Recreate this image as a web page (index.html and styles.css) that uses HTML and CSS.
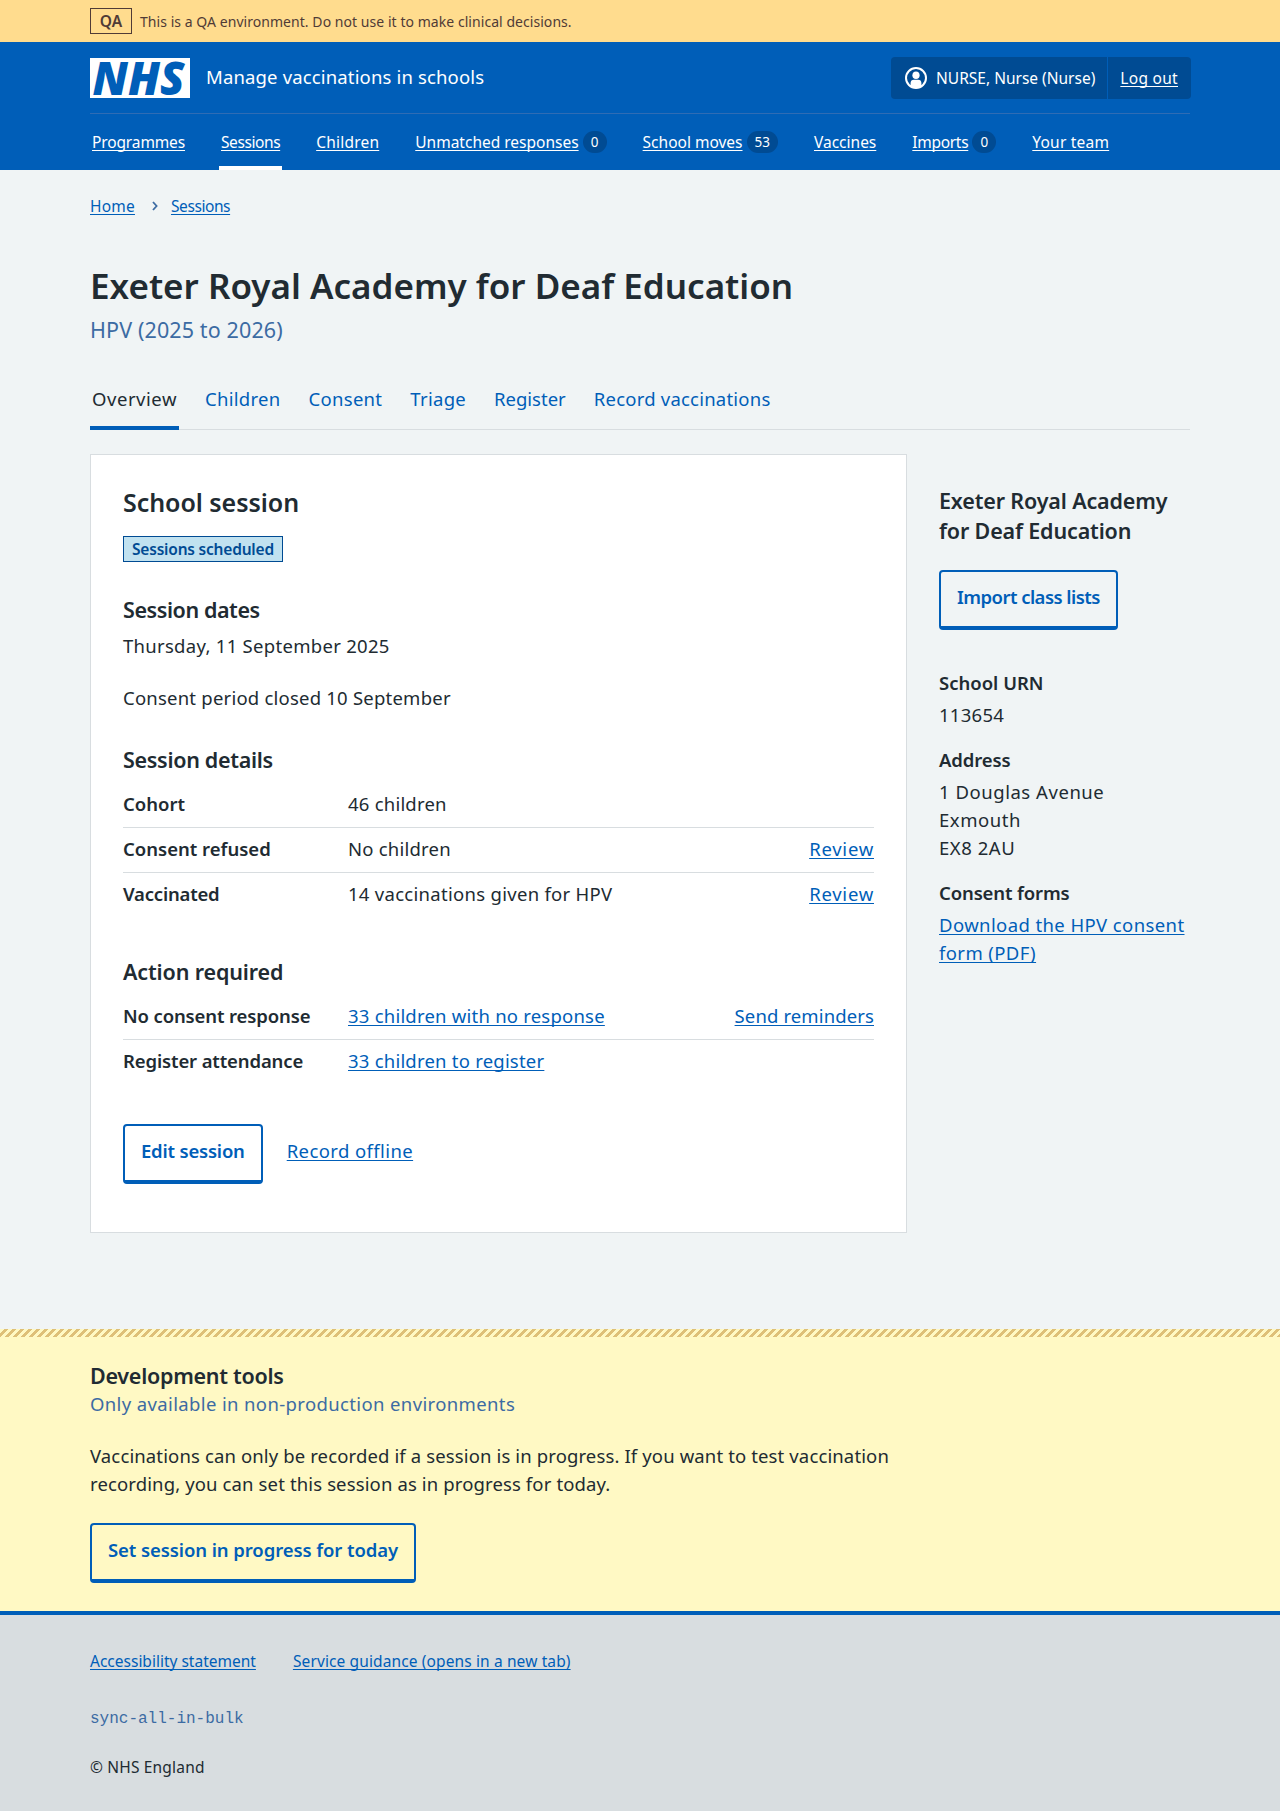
FILE: index.html
```
<!DOCTYPE html>
<html lang="en">
<head>
<meta charset="utf-8">
<title>Exeter Royal Academy for Deaf Education – Manage vaccinations in schools</title>
<link rel="stylesheet" href="styles.css">
</head>
<body>
<div class="environment">
  <div class="container environment-row">
    <strong class="environment-tag">QA</strong>
    <span class="environment-text">This is a QA environment. Do not use it to make clinical decisions.</span>
  </div>
</div>

<header class="header">
  <div class="container">
    <div class="header-top">
      <svg class="logo" width="100" height="40" viewBox="0 0 100 40" role="img" aria-label="NHS">
        <rect width="100" height="40" fill="#fff"/>
        <text class="logo-text" x="2.5" y="36.5" textLength="92" lengthAdjust="spacingAndGlyphs">NHS</text>
      </svg>
      <span class="service-name">Manage vaccinations in schools</span>
      <div class="account">
        <span class="account-user">
          <svg width="22" height="22" viewBox="0 0 22 22" aria-hidden="true">
            <circle cx="11" cy="11" r="10" fill="none" stroke="#fff" stroke-width="2"/>
            <ellipse cx="11" cy="8.2" rx="3.6" ry="3.8" fill="#fff"/>
            <path d="M5.6 19.3v-3.2a3.4 3.4 0 0 1 3.4-3.4h4a3.4 3.4 0 0 1 3.4 3.4v3.2a10 10 0 0 1-10.8 0z" fill="#fff"/>
          </svg>
          NURSE, Nurse (Nurse)
        </span>
        <span class="account-logout"><a class="t-3" href="#">Log out</a></span>
      </div>
    </div>
    <nav class="nav">
      <span class="nav-item"><a class="t--1" href="#">Programmes</a></span>
      <span class="nav-item nav-item-current"><a class="t--4" href="#">Sessions</a></span>
      <span class="nav-item"><a class="t-2" href="#">Children</a></span>
      <span class="nav-item"><a href="#">Unmatched responses</a><span class="count">0</span></span>
      <span class="nav-item"><a href="#">School moves</a><span class="count">53</span></span>
      <span class="nav-item"><a href="#">Vaccines</a></span>
      <span class="nav-item"><a class="t--3" href="#">Imports</a><span class="count">0</span></span>
      <span class="nav-item"><a class="t-2" href="#">Your team</a></span>
    </nav>
  </div>
</header>

<div class="container">
  <nav class="breadcrumb">
    <a class="t-2" href="#">Home</a>
    <svg width="6" height="10" viewBox="0 0 6 10" aria-hidden="true"><path d="M1 1l3.6 4L1 9" fill="none" stroke="#3c6ba3" stroke-width="1.8"/></svg>
    <a class="t--4" href="#">Sessions</a>
  </nav>

  <h1 class="title">Exeter Royal Academy for Deaf Education</h1>
  <p class="caption">HPV (2025 to 2026)</p>

  <nav class="tabs">
    <a class="tab tab-current t-5" href="#">Overview</a>
    <a class="tab t-3" href="#">Children</a>
    <a class="tab t-3" href="#">Consent</a>
    <a class="tab t-3" href="#">Triage</a>
    <a class="tab t-0" href="#">Register</a>
    <a class="tab t-2" href="#">Record vaccinations</a>
  </nav>

  <div class="columns">
    <main class="card">
      <h2 class="card-title">School session</h2>
      <strong class="tag">Sessions scheduled</strong>

      <h3 class="heading section-gap t--4">Session dates</h3>
      <p class="dates t-3">Thursday, 11 September 2025</p>
      <p class="paragraph">Consent period closed 10 September</p>

      <h3 class="heading section-gap t--3">Session details</h3>
      <dl class="summary">
        <div class="row"><dt class="t-0">Cohort</dt><dd class="t-2">46 children</dd></div>
        <div class="row"><dt class="t-0">Consent refused</dt><dd class="t-2">No children</dd><dd><a class="t-7" href="#">Review</a></dd></div>
        <div class="row"><dt class="t--2">Vaccinated</dt><dd class="t-3">14 vaccinations given for HPV</dd><dd><a class="t-7" href="#">Review</a></dd></div>
      </dl>

      <h3 class="heading actions-gap t--1">Action required</h3>
      <dl class="summary">
        <div class="row"><dt>No consent response</dt><dd><a href="#">33 children with no response</a></dd><dd><a class="t-1" href="#">Send reminders</a></dd></div>
        <div class="row"><dt>Register attendance</dt><dd><a href="#">33 children to register</a></dd></div>
      </dl>

      <div class="card-actions">
        <a class="button t--2" href="#">Edit session</a>
        <a class="t-4" href="#">Record offline</a>
      </div>
    </main>

    <aside class="sidebar">
      <h2 class="sidebar-title">Exeter Royal Academy for Deaf Education</h2>
      <a class="button t--5" href="#">Import class lists</a>
      <dl class="facts">
        <dt class="t-0">School URN</dt>
        <dd class="t-3">113654</dd>
        <dt>Address</dt>
        <dd class="t-5">1 Douglas Avenue<br>Exmouth<br>EX8 2AU</dd>
        <dt>Consent forms</dt>
        <dd class="t-4"><a href="#">Download the HPV consent form (PDF)</a></dd>
      </dl>
    </aside>
  </div>
</div>

<section class="devtools">
  <div class="container">
    <h2 class="devtools-title">Development tools</h2>
    <p class="devtools-caption">Only available in non-production environments</p>
    <p class="devtools-text">Vaccinations can only be recorded if a session is in progress. If you want to test vaccination recording, you can set this session as in progress for today.</p>
    <a class="button" href="#">Set session in progress for today</a>
  </div>
</section>

<footer class="footer">
  <div class="container">
    <div class="footer-links">
      <a class="t-0" href="#">Accessibility statement</a>
      <a class="t-1" href="#">Service guidance (opens in a new tab)</a>
    </div>
    <p class="footer-version">sync-all-in-bulk</p>
    <p class="footer-copyright">© NHS England</p>
  </div>
</footer>
</body>
</html>
```
FILE: styles.css
```
* { box-sizing: border-box; }

body {
  margin: 0;
  background: #f0f4f5;
  color: #212b32;
  font: 400 18.5px/28px "Noto Sans", "Open Sans", sans-serif;
  letter-spacing: 0.22px;
}

h1, h2, h3, p, dl, dt, dd { margin: 0; }

a {
  color: #005eb8;
  text-decoration: underline;
  text-decoration-thickness: 1px;
  text-underline-offset: 2px;
  text-decoration-skip-ink: none;
}

.container { width: 1100px; margin: 0 auto; }

/* Environment banner */
.environment { background: #ffdc8e; color: #503b36; font-size: 14px; letter-spacing: 0.05px; }
.environment-row { display: flex; align-items: center; gap: 8px; height: 42px; }
.environment-text { padding-top: 1px; }
.environment-tag {
  width: 42px;
  height: 26px;
  border: 1px solid #503b36;
  font-size: 15.5px;
  font-weight: 650;
  line-height: 24px;
  text-align: center;
}

/* Header */
.header { background: #005eb8; color: #fff; }
.header a { color: #fff; }
.header-top { display: flex; align-items: center; height: 72px; border-bottom: 1px solid #2f6cb4; }
.logo { display: block; overflow: visible; }
.logo-text {
  fill: #005eb8;
  font: italic 800 46px "Open Sans", sans-serif;
  letter-spacing: 0;
}
.service-name { margin-left: 16px; padding-bottom: 2px; letter-spacing: 0.15px; }
.account {
  display: flex;
  height: 42px;
  margin: 0 -1px 0 auto;
  border-radius: 4px;
  background: #004b93;
  font-size: 15.5px;
  letter-spacing: 0;
}
.account-user {
  display: flex;
  align-items: center;
  gap: 9px;
  padding: 0 12px 0 14px;
}
.account-logout {
  display: flex;
  align-items: center;
  padding: 0 13px 0 12px;
  border-left: 1px solid #005eb8;
}
.nav { display: flex; gap: 32px; height: 56px; font-size: 15.5px; letter-spacing: 0; }
.nav-item { display: flex; align-items: center; gap: 4px; padding: 0 2px; }
.nav-item-current { box-shadow: inset 0 -4px #fff; }
.count {
  min-width: 24px;
  padding: 0 8px;
  border-radius: 11px;
  background: #004b93;
  font-size: 13.5px;
  line-height: 22px;
  text-align: center;
}

/* Page heading */
.breadcrumb {
  display: flex;
  align-items: center;
  gap: 17px;
  padding-top: 24px;
  font-size: 15.5px;
  line-height: 24px;
}
.breadcrumb svg { margin-right: -4px; }
.title { margin-top: 46px; font-size: 35px; font-weight: 620; line-height: 44px; letter-spacing: 0; }
.caption { margin-top: 6px; color: #3c6ba3; font-size: 21.5px; line-height: 32px; letter-spacing: 0.12px; }

/* Secondary navigation */
.tabs { display: flex; gap: 24px; margin: 24px 0; box-shadow: inset 0 -1px #d8dde0; }
.tab { padding: 15px 2px 17px; text-decoration: none; }
.tab-current { color: #212b32; box-shadow: inset 0 -4px #005eb8; }

/* Two-column layout */
.columns { display: grid; grid-template-columns: 817px 1fr; gap: 32px; align-items: start; }

.card { padding: 29px 32px 48px; border: 1px solid #d8dde0; background: #fff; }
.card-title { margin-bottom: 16px; font-size: 25px; font-weight: 620; line-height: 36px; letter-spacing: -0.05px; }
.tag {
  display: block;
  width: fit-content;
  padding: 0 8px;
  border: 1px solid #004b93;
  background: #c1e2f0;
  color: #004b93;
  font-size: 15.5px;
  font-weight: 620;
  line-height: 24px;
  letter-spacing: -0.2px;
}
.heading { font-size: 21.5px; font-weight: 620; line-height: 32px; }
.section-gap { margin-top: 32px; }
.actions-gap { margin-top: 38px; }
.dates { margin-top: 6px; }
.paragraph { margin-top: 24px; }

.summary { margin-top: 7px; }
.row {
  display: grid;
  grid-template-columns: 225px 1fr auto;
  height: 45px;
  padding-top: 7px;
  border-bottom: 1px solid #d8dde0;
}
.row:last-child { border-bottom: 0; }
dt { font-weight: 620; letter-spacing: -0.13px; }

.card-actions { display: flex; gap: 24px; margin-top: 39px; }
.card-actions a:last-child { margin-top: 13px; }

.button {
  display: block;
  width: fit-content;
  padding: 11px 16px 15px;
  border: 2px solid #005eb8;
  border-bottom-width: 4px;
  border-radius: 4px;
  font-weight: 620;
  letter-spacing: -0.09px;
  text-decoration: none;
}

/* Sidebar */
.sidebar { padding-top: 32px; }
.sidebar-title { margin-bottom: 24px; font-size: 21.5px; font-weight: 620; line-height: 30px; letter-spacing: -0.15px; }
.facts { margin-top: 39px; }
.facts dd { margin: 4px 0 17px; }

/* Development tools */
.devtools { position: relative; margin-top: 96px; padding: 32px 0 28px; background: #fff9c4; }
.devtools::before {
  content: "";
  position: absolute;
  inset: 0 0 auto;
  height: 8px;
  background: repeating-linear-gradient(135deg, #fff9c4 0 2.83px, #dec078 2.83px 5.66px);
}
.devtools-title { font-size: 21.5px; font-weight: 620; line-height: 30px; letter-spacing: -0.27px; }
.devtools-caption { margin-top: -1px; color: #3c6ba3; letter-spacing: 0.37px; }
.devtools-text { width: 820px; margin: 24px 0 25px; letter-spacing: 0.13px; }

/* Footer */
.footer {
  padding: 34px 0 32px;
  border-top: 4px solid #005eb8;
  background: #d8dde0;
  font-size: 15.5px;
  line-height: 24px;
}
.footer-links { display: flex; gap: 37px; }
.footer-version {
  margin: 34px 0 24px;
  color: #3c6ba3;
  font-family: "Liberation Mono", monospace;
  font-size: 16px;
  letter-spacing: 0;
}
.footer-copyright { letter-spacing: 0.18px; }

/* Tracking utilities */
.t--5 { letter-spacing: -0.54px; }
.t--4 { letter-spacing: -0.42px; }
.t--3 { letter-spacing: -0.3px; }
.t--2 { letter-spacing: -0.2px; }
.t--1 { letter-spacing: -0.13px; }
.t-0 { letter-spacing: 0; }
.t-1 { letter-spacing: 0.12px; }
.t-2 { letter-spacing: 0.22px; }
.t-3 { letter-spacing: 0.29px; }
.t-4 { letter-spacing: 0.4px; }
.t-5 { letter-spacing: 0.54px; }
.t-7 { letter-spacing: 0.75px; }
```
